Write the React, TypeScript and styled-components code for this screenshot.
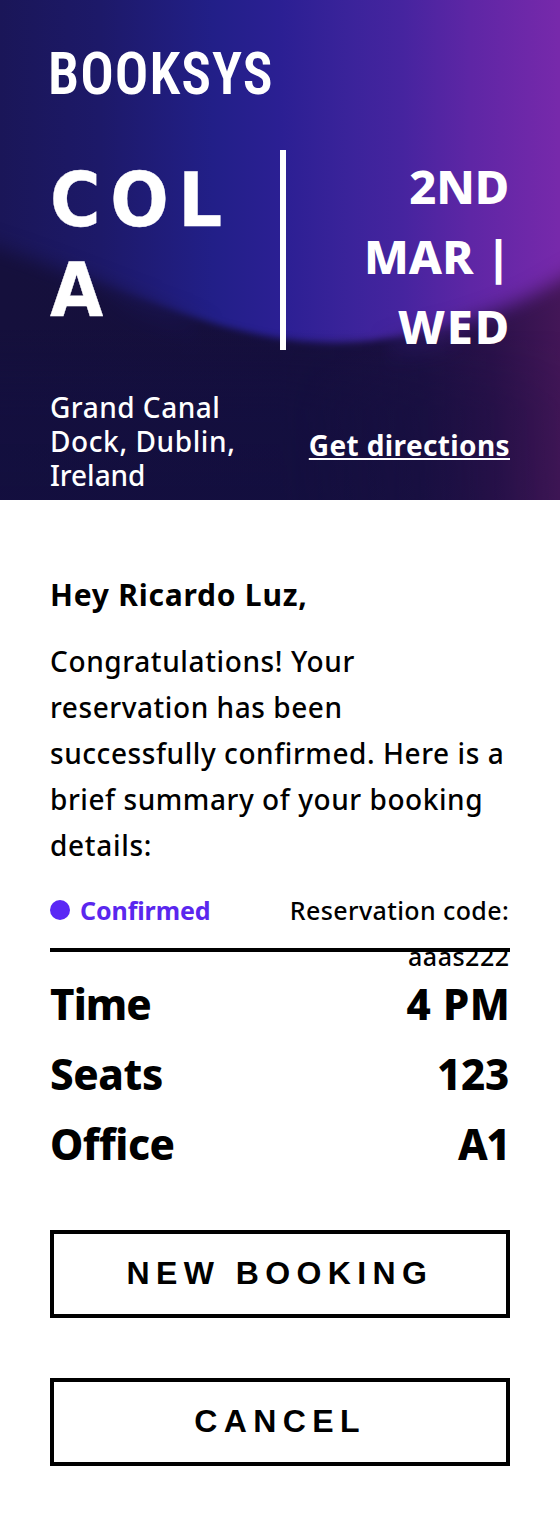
import React from 'react';
import styled, { createGlobalStyle } from 'styled-components';

const GlobalStyle = createGlobalStyle`
  *, *::before, *::after { box-sizing: border-box; }
  html, body { margin: 0; padding: 0; background: #fff; }
  body {
    font-family: "Noto Sans", "Open Sans", sans-serif;
    font-size: 28px;
    font-weight: 500;
    color: #000;
  }
`;

const Page = styled.main`
  width: 560px;
  min-height: 1536px;
  background: #fff;
`;

const Hero = styled.header`
  position: relative;
  height: 500px;
  padding: 50px 50px 0;
  overflow: hidden;
  color: #fff;
  display: flex;
  flex-direction: column;
`;

const Backdrop = styled.svg`
  position: absolute;
  inset: 0;
  width: 560px;
  height: 500px;
`;

const HeroContent = styled.div`
  position: relative;
  display: flex;
  flex-direction: column;
`;

const Brand = styled.div`
  height: 100px;
  margin-left: -2px;
  font: 600 60px/47px "Roboto Condensed", Roboto, sans-serif;
  letter-spacing: 1.1px;
  transform: scaleX(0.93);
  transform-origin: left top;
`;

const Summary = styled.section`
  display: flex;
  height: 200px;
`;

const Title = styled.h1`
  width: 230px;
  margin: 0;
  padding-top: 5px;
  font: 700 74px/90px "DejaVu Sans", sans-serif;
  letter-spacing: 10.4px;
  word-break: break-all;
  -webkit-text-stroke: 0.4px #fff;
  transform: scaleX(0.93);
  transform-origin: left top;
`;

const Divider = styled.div`
  width: 6px;
  flex: none;
  background: #fff;
`;

const DateColumn = styled.div`
  flex: 1;
  display: flex;
  flex-direction: column;
  align-items: flex-end;
  padding-top: 1px;
  font-size: 47px;
  font-weight: 800;
  line-height: 70px;
`;

const Text = styled.span<{ $tracking?: number; $shift?: number }>`
  display: block;
  white-space: nowrap;
  letter-spacing: ${p => p.$tracking ?? 0}px;
  margin-right: ${p => p.$shift ?? 0}px;
`;

const Location = styled.section`
  display: flex;
  justify-content: space-between;
  align-items: flex-start;
  margin-top: 40px;
`;

const Address = styled.address`
  font-style: normal;
  line-height: 34px;
`;

const Directions = styled.a`
  margin-top: 38px;
  line-height: 34px;
  font-weight: 700;
  letter-spacing: 0.38px;
  color: #fff;
  text-decoration: underline;
  text-decoration-thickness: 2px;
  text-underline-offset: 2px;
  text-decoration-skip-ink: none;
`;

const Body = styled.section`
  padding: 72px 50px 0;
`;

const Greeting = styled.h2`
  margin: 0 0 20px;
  font-size: 30px;
  font-weight: 700;
  line-height: 46px;
`;

const Message = styled.div`
  line-height: 46px;
`;

const StatusRow = styled.div`
  display: flex;
  justify-content: space-between;
  height: 65px;
  margin-top: 19px;
  font-size: 25px;
  line-height: 46px;
  border-bottom: 4px solid #000;
`;

const Status = styled.div`
  display: flex;
  height: 46px;
  gap: 10px;
  color: #5a27ee;
  font-weight: 700;
`;

const Dot = styled.span`
  width: 20px;
  height: 20px;
  margin-top: 13px;
  border-radius: 50%;
  background: #5a27f5;
`;

const Code = styled.div`
  display: flex;
  flex-direction: column;
  align-items: flex-end;
`;

const Details = styled.dl`
  margin: 17px 0 0;
`;

const Detail = styled.div`
  display: flex;
  justify-content: space-between;
  font-size: 42px;
  font-weight: 800;
  line-height: 70px;
  dt, dd { margin: 0; }
`;

const Actions = styled.div`
  display: flex;
  flex-direction: column;
  gap: 60px;
  margin-top: 51px;
`;

const Button = styled.button`
  height: 88px;
  padding: 0 0 2px;
  border: 4px solid #000;
  border-radius: 0;
  background: #fff;
  color: #000;
  font: 700 32px/36px "Liberation Sans", Arial, sans-serif;
  letter-spacing: 6.4px;
`;

const details = [
  { label: 'Time', labelTracking: -0.9, value: '4 PM', tracking: 0.6, shift: -0.5 },
  { label: 'Seats', labelTracking: -0.4, value: '123', tracking: -0.3, shift: 1 },
  { label: 'Office', labelTracking: -0.5, value: 'A1', tracking: -1.5, shift: 1 },
];

function HeroBackdrop() {
  return (
    <Backdrop viewBox="0 0 560 500" aria-hidden="true">
      <defs>
        <linearGradient id="sky">
          <stop offset="0" stopColor="#1a1658" />
          <stop offset="0.18" stopColor="#1d1969" />
          <stop offset="0.38" stopColor="#221f88" />
          <stop offset="0.5" stopColor="#2b1f93" />
          <stop offset="0.62" stopColor="#3a239a" />
          <stop offset="0.72" stopColor="#46249f" />
          <stop offset="0.84" stopColor="#5e26a5" />
          <stop offset="1" stopColor="#7729ab" />
        </linearGradient>
        <linearGradient id="hill">
          <stop offset="0" stopColor="#15103c" />
          <stop offset="0.55" stopColor="#160f3d" />
          <stop offset="0.75" stopColor="#1c1042" />
          <stop offset="0.88" stopColor="#2b114a" />
          <stop offset="1" stopColor="#431657" />
        </linearGradient>
        <linearGradient id="depth" x1="0" y1="0" x2="0" y2="1">
          <stop offset="0.66" stopColor="#130f40" stopOpacity="0" />
          <stop offset="0.82" stopColor="#130f40" stopOpacity="0.65" />
          <stop offset="1" stopColor="#130f40" stopOpacity="0.7" />
        </linearGradient>
        <linearGradient id="depthFade">
          <stop offset="0.5" stopColor="#fff" />
          <stop offset="1" stopColor="#fff" stopOpacity="0.15" />
        </linearGradient>
        <mask id="depthMask"><rect width="560" height="500" fill="url(#depthFade)" /></mask>
        <filter id="soft" filterUnits="userSpaceOnUse" x="-80" y="120" width="740" height="500"><feGaussianBlur stdDeviation="10" /></filter>
        <filter id="crisp" filterUnits="userSpaceOnUse" x="-80" y="120" width="740" height="500"><feGaussianBlur stdDeviation="3.5" /></filter>
        <linearGradient id="centre">
          <stop offset="0.12" stopColor="#fff" stopOpacity="0" />
          <stop offset="0.36" stopColor="#fff" />
          <stop offset="0.68" stopColor="#fff" />
          <stop offset="0.86" stopColor="#fff" stopOpacity="0" />
        </linearGradient>
        <linearGradient id="sides">
          <stop offset="0.18" stopColor="#fff" />
          <stop offset="0.4" stopColor="#fff" stopOpacity="0" />
          <stop offset="0.66" stopColor="#fff" stopOpacity="0" />
          <stop offset="0.84" stopColor="#fff" />
        </linearGradient>
        <mask id="centreMask"><rect width="560" height="500" fill="url(#centre)" /></mask>
        <mask id="sidesMask"><rect width="560" height="500" fill="url(#sides)" /></mask>
        <path id="ridge" d="M-80 222 L0 248 C70 271 150 305 215 324 C265 338 300 343 335 343 C385 342 435 332 480 317 C515 305 540 292 560 280 L650 230 V700 H-80 Z" />
        <mask id="hillMask">
          <g mask="url(#sidesMask)"><use href="#ridge" fill="#fff" filter="url(#soft)" /></g>
          <g mask="url(#centreMask)"><use href="#ridge" fill="#fff" filter="url(#crisp)" /></g>
          <g transform="translate(0 20)"><use href="#ridge" fill="#fff" filter="url(#soft)" /></g>
        </mask>
      </defs>
      <rect width="560" height="500" fill="url(#sky)" />
      <rect width="560" height="500" fill="url(#hill)" mask="url(#hillMask)" />
      <rect width="560" height="500" fill="url(#depth)" mask="url(#depthMask)" />
    </Backdrop>
  );
}

export default function App() {
  return (
    <Page>
      <GlobalStyle />
      <Hero>
        <HeroBackdrop />
        <HeroContent>
          <Brand>BOOKSYS</Brand>
          <Summary>
            <Title>COLA</Title>
            <Divider />
            <DateColumn>
              <Text $tracking={-0.2} $shift={1}>2ND</Text>
              <Text $tracking={0.1} $shift={-1}>MAR |</Text>
              <Text $tracking={1.8} $shift={-1}>WED</Text>
            </DateColumn>
          </Summary>
          <Location>
            <Address>
              <Text $tracking={0.5}>Grand Canal</Text>
              <Text $tracking={0.6}>Dock, Dublin,</Text>
              <Text $tracking={-0.05}>Ireland</Text>
            </Address>
            <Directions href="#">Get directions</Directions>
          </Location>
        </HeroContent>
      </Hero>
      <Body>
        <Greeting><Text $tracking={0.77}>Hey Ricardo Luz,</Text></Greeting>
        <Message>
          <Text $tracking={0.62}>Congratulations! Your</Text>
          <Text $tracking={0.56}>reservation has been</Text>
          <Text $tracking={0.57}>successfully confirmed. Here is a</Text>
          <Text $tracking={0.56}>brief summary of your booking</Text>
          <Text $tracking={0.7}>details:</Text>
        </Message>
        <StatusRow>
          <Status>
            <Dot />
            <Text $tracking={-0.1}>Confirmed</Text>
          </Status>
          <Code>
            <Text $tracking={0.4} $shift={0.8}>Reservation code:</Text>
            <Text $tracking={0.5} $shift={0.5}>aaas222</Text>
          </Code>
        </StatusRow>
        <Details>
          {details.map(d => (
            <Detail key={d.label}>
              <dt><Text $tracking={d.labelTracking}>{d.label}</Text></dt>
              <dd><Text $tracking={d.tracking} $shift={d.shift}>{d.value}</Text></dd>
            </Detail>
          ))}
        </Details>
        <Actions>
          <Button>NEW BOOKING</Button>
          <Button>CANCEL</Button>
        </Actions>
      </Body>
    </Page>
  );
}
